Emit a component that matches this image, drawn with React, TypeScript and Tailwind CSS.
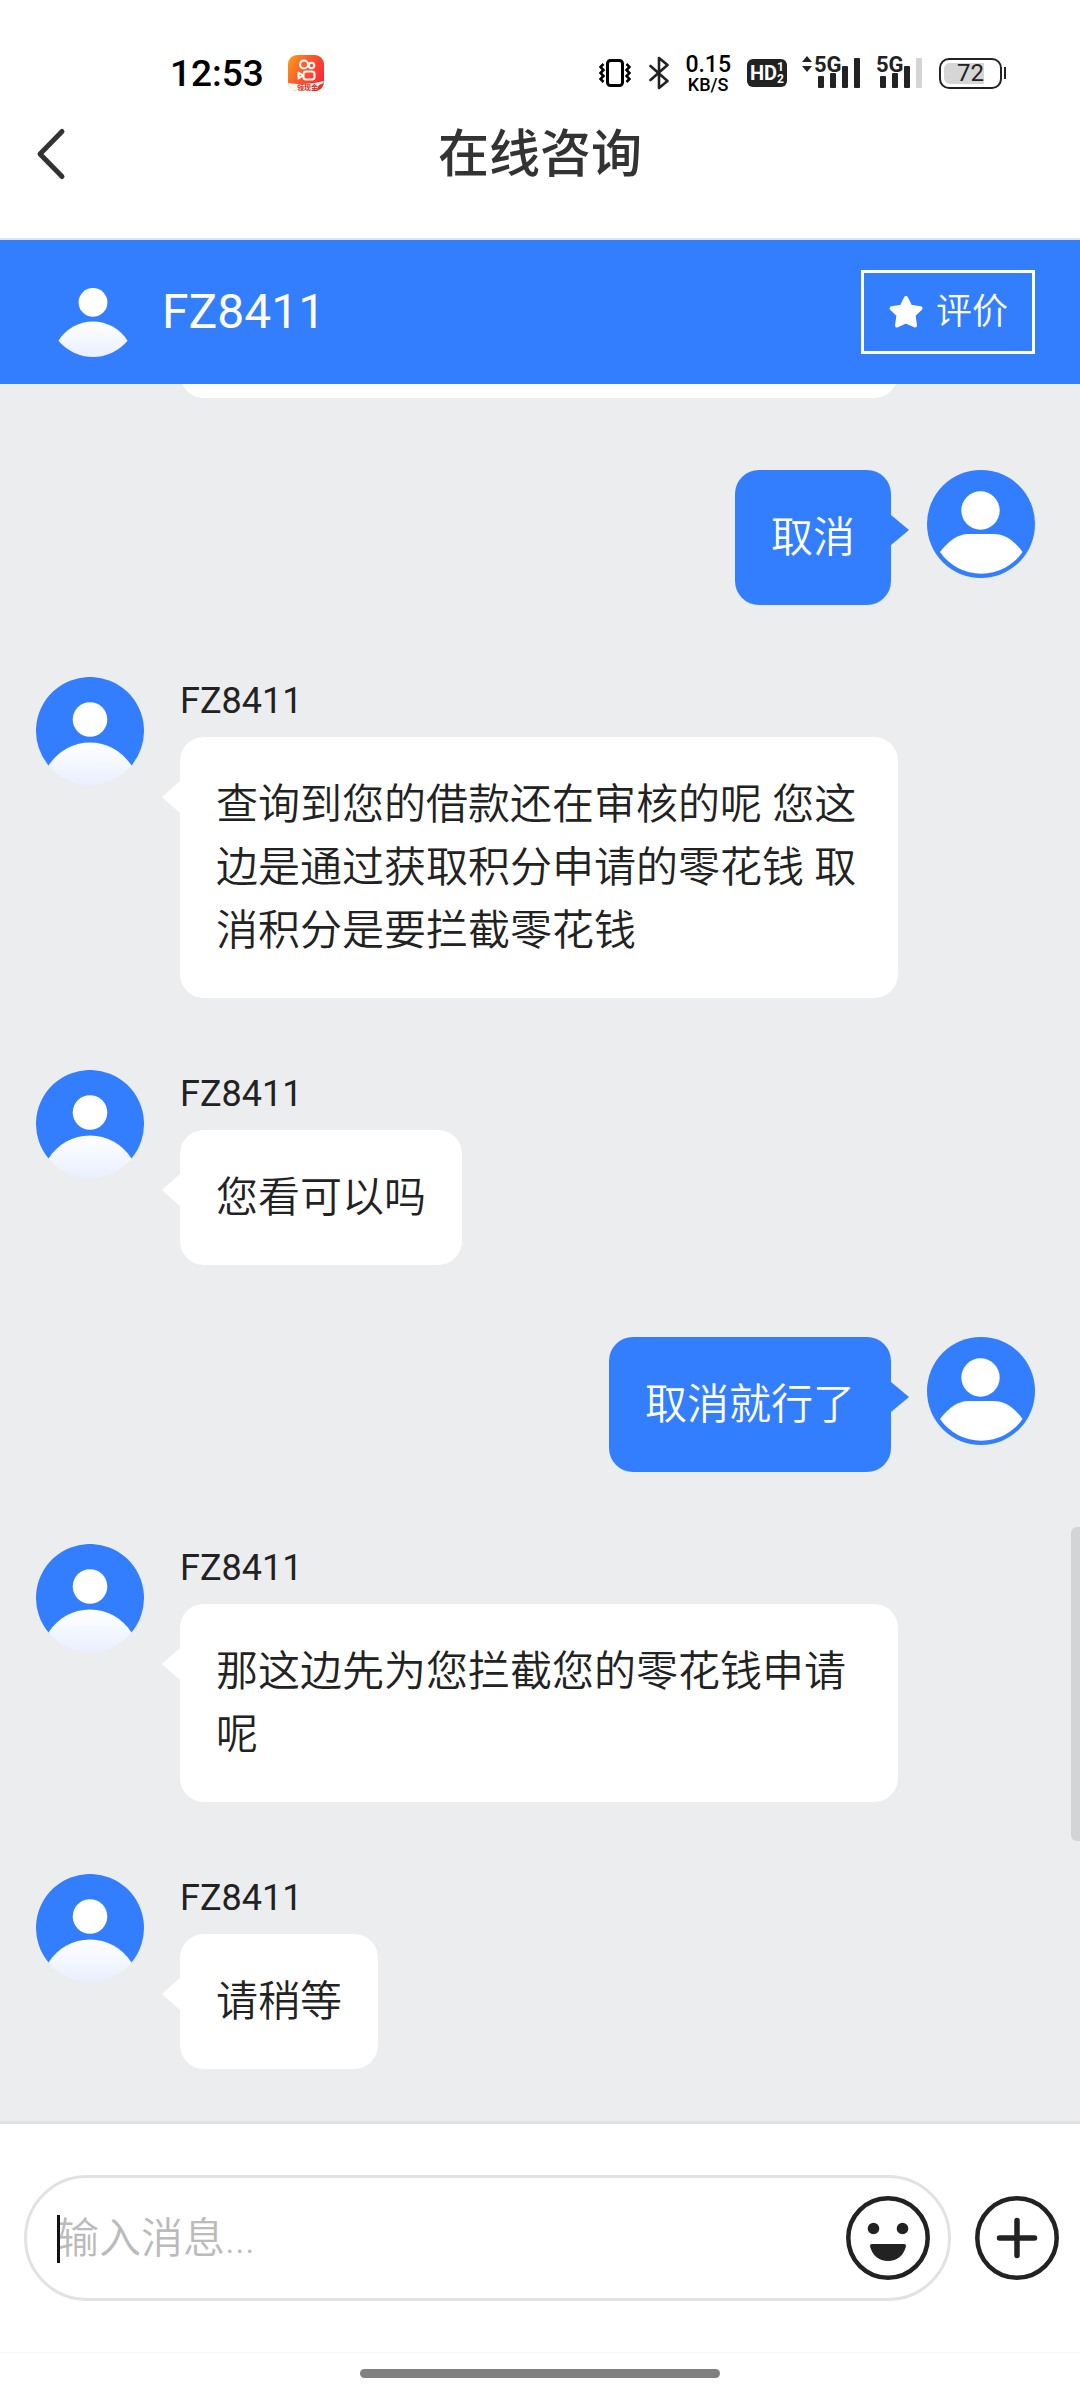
import { useState } from "react";

interface Message {
  id: number;
  from: "agent" | "me";
  text: string;
}

const AGENT_NAME = "FZ8411";

const messages: Message[] = [
  { id: 1, from: "me", text: "取消" },
  { id: 2, from: "agent", text: "查询到您的借款还在审核的呢 您这边是通过获取积分申请的零花钱 取消积分是要拦截零花钱" },
  { id: 3, from: "agent", text: "您看可以吗" },
  { id: 4, from: "me", text: "取消就行了" },
  { id: 5, from: "agent", text: "那这边先为您拦截您的零花钱申请呢" },
  { id: 6, from: "agent", text: "请稍等" },
];

function AgentAvatar({ className }: { className: string }) {
  return (
    <svg className={className} viewBox="0 0 108 108" aria-hidden="true">
      <defs>
        <linearGradient id="agentBody" x1="0" y1="0" x2="0" y2="1">
          <stop offset="0" stopColor="#ffffff" />
          <stop offset="1" stopColor="#e8effe" />
        </linearGradient>
      </defs>
      <path d="M12.5 88.5 A54 54 0 1 1 95.500 88.5 L54 80 Z" fill="#337eff" />
      <circle cx="54" cy="42.5" r="17.3" fill="#fff" />
      <path d="M12.5 88.5 C22 74 37 65.5 54 65.5 S86 74 95.5 88.5 A54 54 0 0 1 12.5 88.5 Z" fill="url(#agentBody)" />
    </svg>
  );
}

function UserAvatar() {
  return (
    <svg className="w-27 h-27 shrink-0" viewBox="0 0 108 108" aria-hidden="true">
      <circle cx="54" cy="54" r="54" fill="#337eff" />
      <circle cx="53.5" cy="40.5" r="19.2" fill="#fff" />
      <path d="M13 82 C22 70 32 64 41 64 H67 C77 64 87 70 95.500 82 A50 50 0 0 1 13 82 Z" fill="#fff" />
    </svg>
  );
}

function AppBadge() {
  return (
    <svg className="w-9 h-9" viewBox="0 0 36 36" aria-hidden="true">
      <defs>
        <linearGradient id="badge" x1="0" y1="0" x2="1" y2="0.6">
          <stop offset="0" stopColor="#fba01c" />
          <stop offset="0.5" stopColor="#fb5a2a" />
          <stop offset="1" stopColor="#fa2a33" />
        </linearGradient>
        <clipPath id="badgeClip">
          <rect width="36" height="36" rx="9" />
        </clipPath>
      </defs>
      <g clipPath="url(#badgeClip)">
        <rect width="36" height="36" fill="url(#badge)" />
        <path d="M0 28 Q18 31 36 26 L32 36 H0 Z" fill="#fff8f0" />
        <path d="M36 28 L33 35 L28 36 L31 30 Z" fill="#e8321f" />
      </g>
      <g fill="none" stroke="#fff" strokeWidth="2">
        <circle cx="16" cy="9.500" r="4" />
        <circle cx="23.500" cy="10.500" r="2.800" />
        <rect x="15.500" y="16.500" width="11" height="8" rx="2.500" />
        <path d="M15 20.500 L10.500 17.500 V23.500 Z" strokeLinejoin="round" />
      </g>
      <text x="9" y="35" fontSize="7" fontWeight="700" fill="#d3261c">领现金</text>
    </svg>
  );
}

function VibrateIcon() {
  return (
    <svg className="w-8 h-8" viewBox="0 0 32 32" fill="none" stroke="#000" aria-hidden="true">
      <rect x="8.500" y="3.500" width="15" height="25" rx="3" strokeWidth="3" />
      <path d="M4.500 7 L1.500 10 L4.500 13 L1.500 16 L4.500 19 L1.500 22 L4.500 25" strokeWidth="2.500" />
      <path d="M27.500 7 L30.500 10 L27.500 13 L30.500 16 L27.500 19 L30.500 22 L27.500 25" strokeWidth="2.500" />
    </svg>
  );
}

function BluetoothIcon() {
  return (
    <svg className="w-5 h-9" viewBox="0 0 20 36" fill="none" stroke="#222" strokeWidth="2.600" aria-hidden="true">
      <path d="M1.500 11 L18.500 26 L10 33 V3 L18.500 10 L1.500 25" strokeLinejoin="round" strokeLinecap="round" />
    </svg>
  );
}

function SignalIcon({ weak }: { weak?: boolean }) {
  return (
    <svg className="w-11 h-8" viewBox="0 0 44 32" fill="#222" aria-hidden="true">
      <rect x="1" y="19" width="6" height="12" rx="1" />
      <rect x="13" y="16" width="6" height="15" rx="1" />
      <rect x="25" y="9" width="6" height="22" rx="1" />
      <rect x="37" y="1" width="6" height="30" rx="1" fill={weak ? "#d4d4d4" : "#222"} />
    </svg>
  );
}

function StatusBar() {
  return (
    <div className="flex items-center justify-between h-24 pt-[50px] pl-[170px] pr-[74px]">
      <div className="flex items-center gap-6">
        <span className="text-[37px] leading-none font-medium text-black">12:53</span>
        <AppBadge />
      </div>
      <div className="flex items-center text-[#222]">
        <VibrateIcon />
        <span className="ml-[18px]">
          <BluetoothIcon />
        </span>
        <div className="ml-4 flex flex-col items-center font-medium text-black">
          <span className="text-[23px] leading-none">0.15</span>
          <span className="text-[18px] leading-none">KB/S</span>
        </div>
        <div className="ml-4 w-10 h-7 rounded-md bg-[#222] text-white flex items-center justify-center font-bold font-['Liberation_Sans_Narrow',Roboto,sans-serif]">
          <span className="text-[20px] leading-none">HD</span>
          <span className="flex flex-col text-[12px] leading-[12px]">
            <span>1</span>
            <span>2</span>
          </span>
        </div>
        <div className="ml-[14px] relative pl-4">
          <svg className="absolute left-0 -top-px w-3 h-4" viewBox="0 0 12 16" fill="#222" aria-hidden="true">
            <path d="M6 0 L11 6 H1 Z M6 16 L1 10 H11 Z" />
          </svg>
          <SignalIcon />
          <span className="absolute left-3 -top-1 px-px text-[22px] leading-6 font-bold font-['Liberation_Sans_Narrow',Roboto,sans-serif]">5G</span>
        </div>
        <div className="ml-[18px] relative">
          <SignalIcon weak />
          <span className="absolute -left-1 -top-1 px-px text-[22px] leading-6 font-bold font-['Liberation_Sans_Narrow',Roboto,sans-serif]">5G</span>
        </div>
        <div className="ml-4 flex items-center gap-0.5">
          <div className="relative w-[63px] h-[31px] rounded-[10px] border-2 border-[#222] p-[3px] flex items-center justify-center">
            <div className="absolute left-[3px] top-[3px] bottom-[3px] w-10 rounded-l-md bg-[#d6d6d6]" />
            <span className="relative text-[24px] leading-none">72</span>
          </div>
          <div className="w-[2px] h-3 bg-[#222]" />
        </div>
      </div>
    </div>
  );
}

function ChatMessage({ message }: { message: Message }) {
  if (message.from === "me") {
    return (
      <div className="flex justify-end items-start gap-9">
        <div className="relative max-w-[718px] rounded-3xl bg-[#337eff] p-9 text-[42px] leading-[63px] font-[350] text-white">
          {message.text}
          <svg className="absolute left-full top-11 w-[18px] h-8" viewBox="0 0 18 32" fill="#337eff" aria-hidden="true">
            <path d="M0 1 L18 16 L0 31 Z" />
          </svg>
        </div>
        <UserAvatar />
      </div>
    );
  }

  return (
    <div className="flex items-start gap-9">
      <AgentAvatar className="w-27 h-27 shrink-0" />
      <div className="flex flex-col items-start">
        <span className="text-[36px] leading-12 mb-3">{AGENT_NAME}</span>
        <div className="relative max-w-[718px] rounded-3xl bg-white p-9 text-[42px] leading-[63px] font-[350]">
          {message.text}
          <svg className="absolute right-full top-11 w-[18px] h-8" viewBox="0 0 18 32" fill="#fff" aria-hidden="true">
            <path d="M18 0 L0 16 L18 32 Z" />
          </svg>
        </div>
      </div>
    </div>
  );
}

function App() {
  const [draft, setDraft] = useState("");

  return (
    <div className="min-h-screen flex flex-col bg-white text-[#222] font-['Roboto','Noto_Sans_CJK_SC',sans-serif]">
      {/* Title bar */}
      <header className="border-b-2 border-[#dfe3ea] pb-[26px]">
        <StatusBar />
        <div className="grid grid-cols-[1fr_auto_1fr] items-center h-[116px] px-6">
          <button type="button" aria-label="返回" className="w-14 h-16 flex items-center justify-center">
            <svg className="w-8 h-14" viewBox="0 0 32 56" fill="none" stroke="#333" strokeWidth="5" strokeLinecap="round" strokeLinejoin="round">
              <path d="M26 5.500 L4 28 L26 50.500" />
            </svg>
          </button>
          <h1 className="text-[51px] leading-none font-medium text-[#333]">在线咨询</h1>
        </div>
      </header>

      {/* Agent bar */}
      <div className="flex items-center justify-between h-36 pl-12 pr-[45px] bg-[#337eff] text-white">
        <div className="flex items-center gap-6">
          <AgentAvatar className="w-[90px] h-[90px]" />
          <span className="text-[48px] leading-none">{AGENT_NAME}</span>
        </div>
        <button type="button" className="flex items-center gap-3 h-21 px-6 border-3 border-white text-[36px] leading-none font-[350]">
          <svg className="w-9 h-9" viewBox="0 0 36 36" fill="#fff" stroke="#fff" strokeWidth="4" strokeLinejoin="round" aria-hidden="true">
            <path d="M18 4 L22.300 12.600 L32.500 14.300 L25.500 21 L27 31.500 L18 27.500 L9 31.500 L10.500 21 L3.500 14.300 L13.700 12.600 Z" />
          </svg>
          评价
        </button>
      </div>

      {/* Messages */}
      <main className="relative flex-1 overflow-hidden bg-[#ecedef] pl-9 pr-[45px] pb-[52px]">
        <div className="-mt-[34px] mb-18 ml-36 h-12 max-w-[718px] rounded-3xl bg-white" />
        <div className="flex flex-col gap-18">
          {messages.map((message) => (
            <ChatMessage key={message.id} message={message} />
          ))}
        </div>
        <div className="absolute right-0 bottom-[280px] w-[9px] h-[314px] rounded-l-md bg-[#d3d4d6]" />
      </main>

      {/* Composer */}
      <footer className="border-t-3 border-[#e2e2e2]">
        <div className="flex items-center gap-6 pl-6 pr-[21px] py-[51px]">
          <div className="flex-1 flex items-center h-[126px] rounded-full border-3 border-[#e2e2e2] pl-[30px] pr-[18px]">
            <div className="relative flex-1">
              <input
                type="text"
                aria-label="输入消息"
                placeholder="输入消息..."
                value={draft}
                onChange={(e) => setDraft(e.target.value)}
                className="block w-full text-[42px] leading-[63px] font-[350] outline-none placeholder:text-[#bbb]"
              />
              {!draft && <span className="absolute left-0 top-2 w-[3px] h-12 bg-[#111]" />}
            </div>
            <button type="button" aria-label="表情">
              <svg className="w-21 h-21" viewBox="0 0 84 84" fill="#222">
                <circle cx="42" cy="42" r="39.700" fill="none" stroke="#222" strokeWidth="4.500" />
                <circle cx="27.500" cy="32.500" r="5.800" />
                <circle cx="56.500" cy="32.500" r="5.800" />
                <path d="M26 48 H58 Q60 48 60 50 C58 59.500 51 65 42 65 S26 59.500 24 50 Q24 48 26 48 Z" />
              </svg>
            </button>
          </div>
          <button type="button" aria-label="更多">
            <svg className="w-21 h-21" viewBox="0 0 84 84" fill="none" stroke="#222" strokeLinecap="round">
              <circle cx="42" cy="42" r="39.700" strokeWidth="4.500" />
              <path d="M42 24.500 V59.500 M24.500 42 H59.500" strokeWidth="5.500" />
            </svg>
          </button>
        </div>
        <div className="flex justify-center h-12 pt-4 border-t border-[#f8f8f8]">
          <div className="w-1/3 h-[9px] rounded-full bg-[#808080]" />
        </div>
      </footer>
    </div>
  );
}

export default App;
